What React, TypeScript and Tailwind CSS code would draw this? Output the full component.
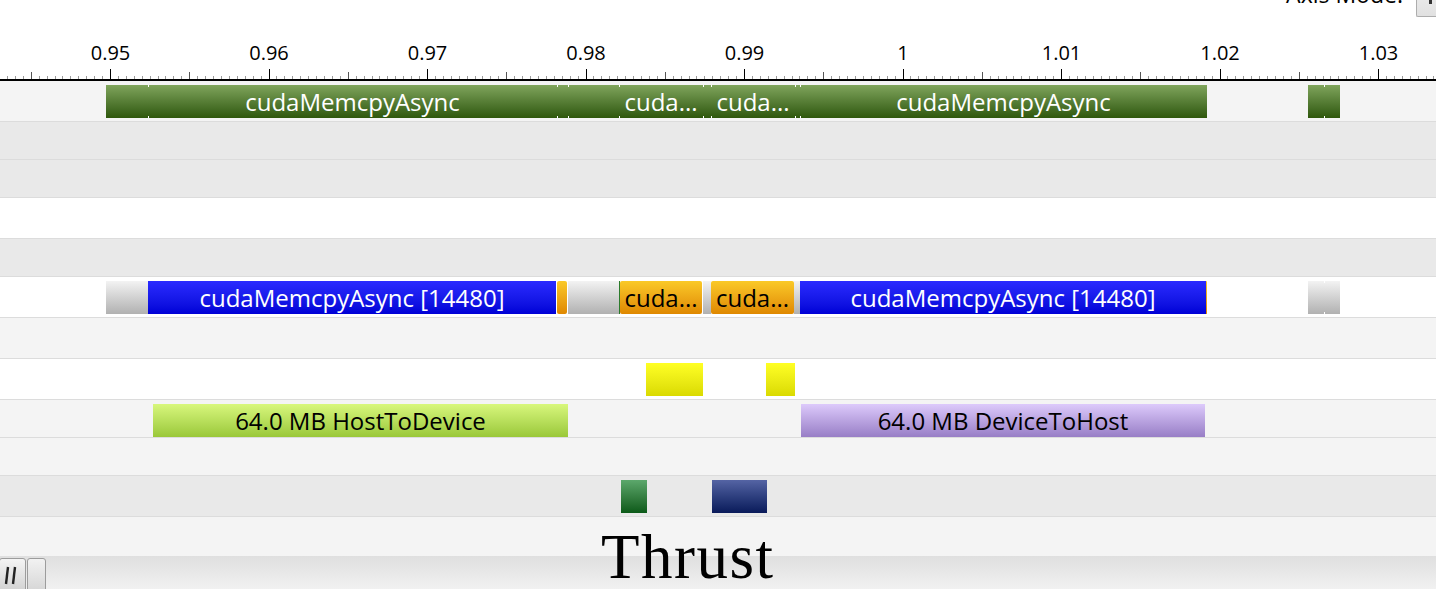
import React from "react";

type Kind = "green" | "gray" | "blue" | "orange" | "yellow" | "lime" | "purple" | "dgreen" | "navy" | "dline";
type Bar = { x1: number; x2: number; k: Kind; t?: string; mark?: boolean };
type Row = { h: number; bg: string; bars: Bar[] };

const KIND: Record<Kind, string> = {
  green: "bg-gradient-to-b from-[#80a55c] to-[#2f580b] text-white",
  gray: "bg-gradient-to-b from-[#f3f3f3] to-[#b1b1b1]",
  blue: "bg-gradient-to-b from-[#2a2aff] to-[#0000d6] text-white",
  orange: "bg-gradient-to-b from-[#fac927] to-[#df8800] text-black rounded-[2px]",
  yellow: "bg-gradient-to-b from-[#ffff24] to-[#dada00]",
  lime: "bg-gradient-to-b from-[#d8f77c] to-[#9ac838] text-black",
  purple: "bg-gradient-to-b from-[#ddcafb] to-[#987ec6] text-black",
  dgreen: "bg-gradient-to-b from-[#5ca86c] to-[#0a5a18]",
  navy: "bg-gradient-to-b from-[#5564a4] to-[#0a1a5a]",
  dline: "bg-[#2b7a2b]",
};

const rows: Row[] = [
  {
    h: 41,
    bg: "bg-[#f4f4f4]",
    bars: [
      { x1: 106, x2: 148, k: "green" },
      { x1: 148, x2: 557, k: "green", t: "cudaMemcpyAsync", mark: true },
      { x1: 557, x2: 568, k: "green", mark: true },
      { x1: 568, x2: 619, k: "green", mark: true },
      { x1: 619, x2: 703, k: "green", t: "cuda...", mark: true },
      { x1: 703, x2: 711, k: "green", mark: true },
      { x1: 711, x2: 795, k: "green", t: "cuda...", mark: true },
      { x1: 795, x2: 800, k: "green", mark: true },
      { x1: 800, x2: 1207, k: "green", t: "cudaMemcpyAsync", mark: true },
      { x1: 1308, x2: 1324, k: "green" },
      { x1: 1324, x2: 1340, k: "green", mark: true },
    ],
  },
  { h: 38, bg: "bg-[#e9e9e9]", bars: [] },
  { h: 38, bg: "bg-[#e9e9e9]", bars: [] },
  { h: 41, bg: "bg-white", bars: [] },
  { h: 38, bg: "bg-[#e9e9e9]", bars: [] },
  {
    h: 41,
    bg: "bg-white",
    bars: [
      { x1: 106, x2: 148, k: "gray" },
      { x1: 148, x2: 556, k: "blue", t: "cudaMemcpyAsync [14480]" },
      { x1: 557, x2: 567, k: "orange" },
      { x1: 568, x2: 619, k: "gray" },
      { x1: 619, x2: 620, k: "dline" },
      { x1: 620, x2: 702, k: "orange", t: "cuda..." },
      { x1: 703, x2: 711, k: "gray" },
      { x1: 711, x2: 794, k: "orange", t: "cuda..." },
      { x1: 794, x2: 800, k: "gray" },
      { x1: 800, x2: 1206, k: "blue", t: "cudaMemcpyAsync [14480]" },
      { x1: 1206, x2: 1207, k: "orange" },
      { x1: 1308, x2: 1324, k: "gray" },
      { x1: 1324, x2: 1340, k: "gray", mark: true },
    ],
  },
  { h: 41, bg: "bg-[#f4f4f4]", bars: [] },
  {
    h: 41,
    bg: "bg-white",
    bars: [
      { x1: 646, x2: 703, k: "yellow" },
      { x1: 766, x2: 795, k: "yellow" },
    ],
  },
  {
    h: 38,
    bg: "bg-[#f4f4f4]",
    bars: [
      { x1: 153, x2: 568, k: "lime", t: "64.0 MB HostToDevice" },
      { x1: 801, x2: 1205, k: "purple", t: "64.0 MB DeviceToHost" },
    ],
  },
  { h: 38, bg: "bg-[#f4f4f4]", bars: [] },
  {
    h: 41,
    bg: "bg-[#e9e9e9]",
    bars: [
      { x1: 621, x2: 647, k: "dgreen" },
      { x1: 712, x2: 767, k: "navy" },
    ],
  },
  { h: 39, bg: "bg-[#f4f4f4]", bars: [] },
];

const ORIGIN = 110;
const STEP = 158.5;
const labels = ["0.95", "0.96", "0.97", "0.98", "0.99", "1", "1.01", "1.02", "1.03"];

function Ruler() {
  const ticks: React.ReactNode[] = [];
  const minor = STEP / 20;
  for (let k = -14; k < 170; k++) {
    const x = Math.round(ORIGIN + k * minor) + 0.5;
    if (x < 0 || x > 1436) continue;
    const major = k % 20 === 0;
    const medium = !major && k % 10 === 0;
    const y1 = major ? 69 : medium ? 72 : 76;
    const color = major ? "#000" : medium ? "#555" : "#9a9a9a";
    ticks.push(<line key={k} x1={x} x2={x} y1={y1} y2={79} stroke={color} strokeWidth={1} />);
  }
  return (
    <svg className="absolute left-0 top-0" width={1436} height={81}>
      {ticks}
      <rect x={0} y={79} width={1436} height={2} fill="#000" />
    </svg>
  );
}

function BarView({ b }: { b: Bar }) {
  return (
    <div
      className={`absolute top-0 h-[33px] flex items-center justify-center overflow-hidden whitespace-nowrap text-[24px] leading-none ${KIND[b.k]}`}
      style={{ left: b.x1, width: b.x2 - b.x1 }}
    >
      {b.mark && (
        <>
          <span className="absolute left-0 top-0 w-px h-[2px] bg-white" />
          <span className="absolute left-0 bottom-0 w-px h-[2px] bg-white" />
        </>
      )}
      {b.t && <span className="relative">{b.t}</span>}
    </div>
  );
}

export default function App() {
  return (
    <div className="relative w-[1436px] h-[589px] overflow-hidden bg-white font-['Open_Sans','Noto_Sans',sans-serif] text-black">
      {/* Header with ruler */}
      <div className="relative h-[81px]">
        <Ruler />
        {labels.map((l, i) => (
          <span
            key={l}
            className="absolute top-[43px] -translate-x-1/2 text-[20px] leading-[20px]"
            style={{ left: ORIGIN + i * STEP + 0.5 }}
          >
            {l}
          </span>
        ))}
        <div className="absolute right-0 top-[-18px] flex items-start gap-[13px]">
          <span className="text-[23px] leading-[24px]">Axis Mode:</span>
          <div className="relative w-[20px] h-[35px] border border-r-0 border-[#adadad] bg-gradient-to-b from-[#f0f0f0] to-[#e1e1e1] rounded-l-[2px]">
            <span className="absolute left-[12px] top-[17px] w-[3px] h-[4px] bg-[#333]" />
          </div>
        </div>
      </div>

      {/* Timeline rows */}
      <div className="flex flex-col">
        {rows.map((r, i) => (
          <div
            key={i}
            className={`relative ${r.bg} ${i < rows.length - 1 ? "border-b border-[#dcdcdc]" : ""}`}
            style={{ height: r.h }}
          >
            <div className="absolute left-0 right-0 top-[4px] h-[33px]">
              {r.bars.map((b, j) => (
                <BarView key={j} b={b} />
              ))}
            </div>
          </div>
        ))}
      </div>

      {/* Bottom scrollbar */}
      <div className="h-[33px] bg-gradient-to-b from-[#dfdfdf] to-[#f1f1f1] flex items-start pt-[2px] gap-[1px]">
        <div className="w-[27px] h-[34px] border border-[#9c9c9c] rounded-[3px] bg-gradient-to-b from-[#f4f4f4] to-[#d2d2d2] -ml-[1px] flex items-start pt-[7px] pl-[3px]">
          <svg width="16" height="20" viewBox="0 0 16 20">
            <path d="M5 1 L3 18" stroke="#222" strokeWidth="2.4" />
            <path d="M12 1 L10 18" stroke="#222" strokeWidth="2.4" />
          </svg>
        </div>
        <div className="w-[19px] h-[34px] border border-[#9c9c9c] rounded-[3px] bg-gradient-to-b from-[#f2f2f2] to-[#d6d6d6]" />
      </div>

      {/* Caption overlay */}
      <span className="absolute left-[601px] top-[526px] font-['Liberation_Serif',serif] text-[63px] leading-[63px] tracking-[1.5px] text-black">
        Thrust
      </span>
    </div>
  );
}
